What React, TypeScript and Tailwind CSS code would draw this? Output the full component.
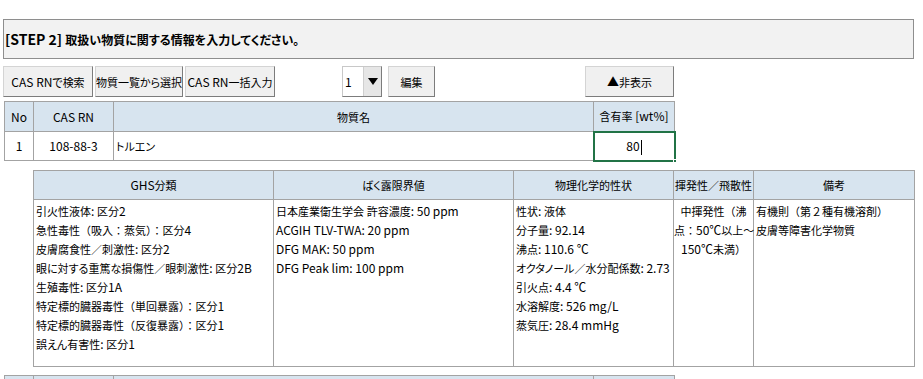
import React from "react";

const font = "font-['Noto_Sans_CJK_JP','Noto_Sans',sans-serif]";

const CJK_RE = /([\u3000-\u30ff\u3400-\u9fff\uff00-\uffef]+)/;
const KANA_RE = /([\u3041-\u30fa\u30fc]+)/;

function Cjk({ t, big }: { t: string; big: boolean }) {
  const parts = t.split(KANA_RE);
  return (
    <span className={big ? "text-[12px]" : "text-[11px]"}>
      {parts.map((p, i) =>
        p === "" ? null : KANA_RE.test(p) ? (
          <span key={i} className="[font-feature-settings:'palt']">
            {p}
          </span>
        ) : (
          <span key={i}>{p}</span>
        )
      )}
    </span>
  );
}

function J({ t, big = false }: { t: string; big?: boolean }) {
  const parts = t.split(CJK_RE);
  return (
    <span className="whitespace-pre">
      {parts.map((p, i) =>
        p === "" ? null : CJK_RE.test(p) ? <Cjk key={i} t={p} big={big} /> : <span key={i}>{p}</span>
      )}
    </span>
  );
}

function Btn({ children, className = "" }: { children: React.ReactNode; className?: string }) {
  return (
    <div
      className={`h-[31px] flex items-center justify-center whitespace-nowrap bg-[#f0f0f0] border border-[#d4d4d4] border-r-[#7c7c7c] border-b-[#7c7c7c] text-[12px] text-black ${className}`}
    >
      {children}
    </div>
  );
}

const th = "bg-[#d7e4ef] border border-[#a3a3a3] font-normal text-[12px] text-black text-center whitespace-nowrap";
const td = "border border-[#a3a3a3] text-[12px] text-black";

function Lines({ items }: { items: string[] }) {
  return (
    <>
      {items.map((s, i) => (
        <div key={i} className="whitespace-nowrap h-[19px] leading-[19px]">
          <J t={s} />
        </div>
      ))}
    </>
  );
}

export default function App() {
  return (
    <div className={`w-[923px] h-[379px] bg-white overflow-hidden ${font} text-black`}>
      <div className="pt-[19px] pl-[3px]">
        <div className="w-[911px] h-[40px] bg-[#f2f2f2] border border-[#8e8e8e] flex items-center pl-[1px] text-[14px] font-bold whitespace-nowrap">
          <J t="[STEP 2] 取扱い物質に関する情報を入力してください。" big />
        </div>
      </div>

      <div className="flex items-center mt-[7px] pl-[3px]">
        <Btn className="w-[90px]"><J t="CAS RNで検索" /></Btn>
        <Btn className="w-[88px] ml-[2px]"><J t="物質一覧から選択" /></Btn>
        <Btn className="w-[90px] ml-[2px]"><J t="CAS RN一括入力" /></Btn>
        <div className="ml-[67px] w-[40px] h-[31px] flex bg-white border border-[#c8c8c8] border-r-[#7c7c7c] border-b-[#7c7c7c]">
          <div className="flex-1 flex items-center pl-[2px] text-[12px]">1</div>
          <div className="w-[18px] flex items-center justify-center bg-[#e6e6e6] border-l border-[#cfcfcf]">
            <svg width="10" height="7" viewBox="0 0 10 7">
              <path d="M0 0 H10 L5 7 Z" fill="#000" />
            </svg>
          </div>
        </div>
        <Btn className="w-[47px] ml-[6px]"><J t="編集" /></Btn>
        <Btn className="w-[89px] ml-[150px]"><J t="▲非表示" /></Btn>
      </div>

      <div className="pl-[4px] mt-[4px]">
        <table className="border-collapse table-fixed w-[670px]">
          <colgroup>
            <col className="w-[29px]" />
            <col className="w-[80px]" />
            <col className="w-[480px]" />
            <col className="w-[81px]" />
          </colgroup>
          <thead>
            <tr className="h-[30px]">
              <th className={th}>No</th>
              <th className={th}>CAS RN</th>
              <th className={th}><J t="物質名" /></th>
              <th className={th}><J t="含有率 [wt%]" /></th>
            </tr>
          </thead>
          <tbody>
            <tr className="h-[29px]">
              <td className={`${td} text-center`}>1</td>
              <td className={`${td} text-center`}>108-88-3</td>
              <td className={`${td} pl-[2px]`}><J t="トルエン" /></td>
              <td className="relative border-2 border-[#217346] text-[12px] text-center p-0">
                <span>80</span>
                <span className="inline-block w-px h-[15px] bg-black align-middle ml-px" />
                <span className="absolute right-[-3px] bottom-[-3px] w-[4px] h-[4px] bg-[#217346] border border-white" />
              </td>
            </tr>
          </tbody>
        </table>
      </div>

      <div className="pl-[33px] mt-[8px]">
        <table className="border-collapse table-fixed w-[881px]">
          <colgroup>
            <col className="w-[240px]" />
            <col className="w-[240px]" />
            <col className="w-[160px]" />
            <col className="w-[80px]" />
            <col className="w-[161px]" />
          </colgroup>
          <thead>
            <tr className="h-[29px]">
              <th className={th}><J t="GHS分類" /></th>
              <th className={th}><J t="ばく露限界値" /></th>
              <th className={th}><J t="物理化学的性状" /></th>
              <th className={th}><J t="揮発性／飛散性" /></th>
              <th className={th}><J t="備考" /></th>
            </tr>
          </thead>
          <tbody>
            <tr className="h-[167px]">
              <td className={`${td} align-top pl-[2px] pt-[1px]`}>
                <Lines
                  items={[
                    "引火性液体: 区分2",
                    "急性毒性（吸入：蒸気）：区分4",
                    "皮膚腐食性／刺激性: 区分2",
                    "眼に対する重篤な損傷性／眼刺激性: 区分2B",
                    "生殖毒性: 区分1A",
                    "特定標的臓器毒性（単回暴露）：区分1",
                    "特定標的臓器毒性（反復暴露）：区分1",
                    "誤えん有害性: 区分1",
                  ]}
                />
              </td>
              <td className={`${td} align-top pl-[2px] pt-[1px]`}>
                <Lines
                  items={[
                    "日本産業衛生学会 許容濃度: 50 ppm",
                    "ACGIH TLV-TWA: 20 ppm",
                    "DFG MAK: 50 ppm",
                    "DFG Peak lim: 100 ppm",
                  ]}
                />
              </td>
              <td className={`${td} align-top pl-[2px] pt-[1px]`}>
                <Lines
                  items={[
                    "性状: 液体",
                    "分子量: 92.14",
                    "沸点: 110.6 ℃",
                    "オクタノール／水分配係数: 2.73",
                    "引火点: 4.4 ℃",
                    "水溶解度: 526 mg/L",
                    "蒸気圧: 28.4 mmHg",
                  ]}
                />
              </td>
              <td className={`${td} align-top text-center pt-[1px]`}>
                <Lines items={["中揮発性（沸", "点：50℃以上～", "150℃未満）"]} />
              </td>
              <td className={`${td} align-top pl-[2px] pt-[1px]`}>
                <Lines items={["有機則（第２種有機溶剤）", "皮膚等障害化学物質"]} />
              </td>
            </tr>
          </tbody>
        </table>
      </div>

      <div className="pl-[4px] mt-[8px]">
        <table className="border-collapse table-fixed w-[670px]">
          <colgroup>
            <col className="w-[29px]" />
            <col className="w-[80px]" />
            <col className="w-[480px]" />
            <col className="w-[81px]" />
          </colgroup>
          <thead>
            <tr className="h-[30px]">
              <th className={th}></th>
              <th className={th}></th>
              <th className={th}></th>
              <th className={th}></th>
            </tr>
          </thead>
        </table>
      </div>
    </div>
  );
}
